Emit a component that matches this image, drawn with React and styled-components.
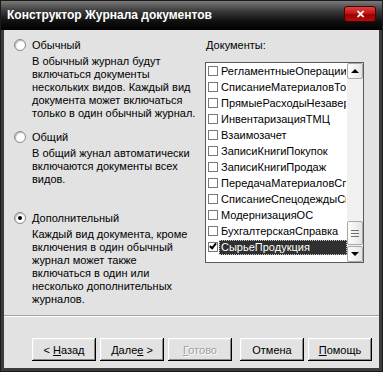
import styled, { createGlobalStyle } from "styled-components";

const GlobalStyle = createGlobalStyle`
  html, body {
    margin: 0;
    padding: 0;
    background: #2b2b2b;
  }
  * {
    box-sizing: border-box;
  }
`;

const options = [
  {
    label: "Обычный",
    text: [
      "В обычный журнал будут",
      "включаться документы",
      "нескольких видов. Каждый вид",
      "документа может включаться",
      "только в один обычный журнал.",
    ],
    gap: 0,
  },
  {
    label: "Общий",
    text: [
      "В общий жунал автоматически",
      "включаются документы всех",
      "видов.",
    ],
    gap: 10,
  },
  {
    label: "Дополнительный",
    text: [
      "Каждый вид документа, кроме",
      "включения в один обычный",
      "журнал может также",
      "включаться в один или",
      "несколько дополнительных",
      "журналов.",
    ],
    gap: 25,
    checked: true,
  },
];

// the list is narrow, long names are cut by the scrollbar as in the original
const documents = [
  "РегламентныеОперацииП",
  "СписаниеМатериаловТов",
  "ПрямыеРасходыНезавер",
  "ИнвентаризацияТМЦ",
  "Взаимозачет",
  "ЗаписиКнигиПокупок",
  "ЗаписиКнигиПродаж",
  "ПередачаМатериаловСпе",
  "СписаниеСпецодеждыСп",
  "МодернизацияОС",
  "БухгалтерскаяСправка",
  "СырьеПродукция",
];

const App = () => {
  return (
    <>
      <GlobalStyle />
      <Window>
        <TitleBar>
          <Title>Конструктор Журнала документов</Title>
          <CloseButton>✕</CloseButton>
        </TitleBar>
        <Client>
          <Body>
            <Left>
              {options.map((o) => (
                <Option key={o.label} $gap={o.gap}>
                  <RadioRow>
                    <Radio $checked={o.checked} />
                    <span>{o.label}</span>
                  </RadioRow>
                  <Description>
                    {o.text.map((line) => (
                      <div key={line}>{line}</div>
                    ))}
                  </Description>
                </Option>
              ))}
            </Left>
            <Right>
              <ListLabel>
                <u>Д</u>окументы:
              </ListLabel>
              <ListBox>
                <Items>
                  {documents.map((d, i) => {
                    const selected = i === documents.length - 1;
                    return (
                      <Item key={d}>
                        <CheckBox>{selected && <CheckMark />}</CheckBox>
                        <ItemText $selected={selected}>{d}</ItemText>
                      </Item>
                    );
                  })}
                </Items>
                <ScrollBar>
                  <ScrollButton>
                    <Arrow $up />
                  </ScrollButton>
                  <Track>
                    <Thumb>
                      <Grip />
                      <Grip />
                      <Grip />
                    </Thumb>
                  </Track>
                  <ScrollButton>
                    <Arrow />
                  </ScrollButton>
                </ScrollBar>
              </ListBox>
            </Right>
          </Body>
          <Separator />
          <ButtonRow>
            <Button>
              &lt; <u>Н</u>азад
            </Button>
            <Button>
              Дале<u>е</u> &gt;
            </Button>
            <Button disabled>
              <u>Г</u>отово
            </Button>
            <Button $wide>Отмена</Button>
            <Button>
              <u>П</u>омощь
            </Button>
          </ButtonRow>
        </Client>
      </Window>
    </>
  );
};

export default App;

const Window = styled.div`
  width: 383px;
  height: 372px;
  display: flex;
  flex-direction: column;
  background: #3c3c3c;
  border: 1px solid #1a1a1a;
  font-family: "Liberation Sans", Arial, sans-serif;
  font-size: 11px;
  color: #000;
  overflow: hidden;
`;

const TitleBar = styled.div`
  height: 29px;
  flex-shrink: 0;
  display: flex;
  align-items: center;
  justify-content: space-between;
  padding: 0 6px 4px 6px;
  background: linear-gradient(#7a7a7a 0%, #3a3a3a 35%, #101010 70%, #000 100%);
`;

const Title = styled.div`
  color: #fff;
  font-weight: bold;
  font-size: 12px;
  padding-top: 3px;
`;

const CloseButton = styled.div`
  width: 32px;
  height: 16px;
  margin-top: 1px;
  border: 1px solid #4a0000;
  border-radius: 3px;
  background: linear-gradient(#e04040 0%, #c01818 45%, #9c0000 55%, #b01010 100%);
  color: #fff;
  font-size: 11px;
  font-weight: bold;
  display: flex;
  align-items: center;
  justify-content: center;
  line-height: 1;
`;

const Client = styled.div`
  flex: 1;
  margin: 0 3px 3px;
  background: #e2e2e2;
  display: flex;
  flex-direction: column;
`;

const Body = styled.div`
  display: flex;
  height: 285px;
`;

const Left = styled.div`
  width: 196px;
  padding: 8px 0 0 10px;
`;

const Option = styled.div`
  margin-top: ${(p) => p.$gap}px;
`;

const RadioRow = styled.div`
  display: flex;
  align-items: center;
  gap: 6px;
  height: 14px;
  line-height: 14px;
`;

const Radio = styled.span`
  width: 12px;
  height: 12px;
  border-radius: 50%;
  flex-shrink: 0;
  background: radial-gradient(circle at 60% 60%, #ffffff 40%, #d8d8d8 100%);
  border: 1px solid #8a8a8a;
  box-shadow: inset 1px 1px 0 #c0c0c0;
  display: flex;
  align-items: center;
  justify-content: center;

  &::after {
    content: "";
    width: 4px;
    height: 4px;
    border-radius: 50%;
    background: ${(p) => (p.$checked ? "#000" : "transparent")};
  }
`;

const Description = styled.div`
  margin-top: 3px;
  padding-left: 18px;
  line-height: 13px;
  white-space: nowrap;
`;

const Right = styled.div`
  flex: 1;
  padding: 8px 0 0 5px;
`;

const ListLabel = styled.div`
  height: 14px;
  line-height: 14px;
  padding-left: 1px;
`;

const ListBox = styled.div`
  margin-top: 10px;
  width: 159px;
  height: 201px;
  display: flex;
  background: #fff;
  border: 1px solid #5a5a5a;
`;

const Items = styled.div`
  flex: 1;
  min-width: 0;
  overflow: hidden;
`;

const Item = styled.div`
  height: 16px;
  display: flex;
  align-items: center;
  padding-left: 2px;
`;

const CheckBox = styled.span`
  width: 10px;
  height: 10px;
  flex-shrink: 0;
  border: 1px solid #7a7a7a;
  background: #fff;
  position: relative;
`;

const CheckMark = styled.span`
  position: absolute;
  left: 2px;
  top: -1px;
  width: 4px;
  height: 7px;
  border: solid #000;
  border-width: 0 2px 2px 0;
  transform: rotate(40deg);
`;

const ItemText = styled.span`
  flex: 1;
  height: 15px;
  line-height: 13px;
  margin-left: 1px;
  padding: 0 1px;
  white-space: nowrap;
  overflow: hidden;
  color: ${(p) => (p.$selected ? "#fff" : "#000")};
  background: ${(p) => (p.$selected ? "#303030" : "transparent")};
  border: 1px dotted ${(p) => (p.$selected ? "#c8c8c8" : "transparent")};
`;

const ScrollBar = styled.div`
  width: 16px;
  flex-shrink: 0;
  display: flex;
  flex-direction: column;
  background: #f0f0f0;
`;

const ScrollButton = styled.div`
  height: 16px;
  flex-shrink: 0;
  border: 1px solid #a8a8a8;
  border-radius: 2px;
  background: linear-gradient(90deg, #fdfdfd, #e4e4e4);
  display: flex;
  align-items: center;
  justify-content: center;
`;

const Arrow = styled.span`
  width: 0;
  height: 0;
  border-left: 4px solid transparent;
  border-right: 4px solid transparent;
  ${(p) =>
    p.$up ? "border-bottom: 4px solid #000;" : "border-top: 4px solid #000;"}
`;

const Track = styled.div`
  flex: 1;
  display: flex;
  flex-direction: column;
  justify-content: flex-end;
  padding-bottom: 1px;
`;

const Thumb = styled.div`
  height: 24px;
  border: 1px solid #a8a8a8;
  border-radius: 2px;
  background: linear-gradient(90deg, #fdfdfd, #e4e4e4);
  display: flex;
  flex-direction: column;
  align-items: center;
  justify-content: center;
  gap: 2px;
`;

const Grip = styled.span`
  width: 8px;
  height: 1px;
  background: #707070;
`;

const Separator = styled.div`
  height: 2px;
  border-top: 1px solid #a0a0a0;
  border-bottom: 1px solid #ffffff;
`;

const ButtonRow = styled.div`
  flex: 1;
  display: flex;
  padding: 21px 0 0 28px;
  gap: 4px;
`;

const Button = styled.button`
  width: 64px;
  height: 23px;
  margin-left: ${(p) => (p.$wide ? "4px" : "0")};
  padding: 0;
  font-family: "Liberation Sans", Arial, sans-serif;
  font-size: 11px;
  font-weight: 400;
  background: #e2e2e2;
  color: #000;
  border: none;
  box-shadow: inset -1px -1px 0 #000, inset 1px 1px 0 #fff,
    inset -2px -2px 0 #8a8a8a, inset 2px 2px 0 #e8e8e8;

  &:disabled {
    color: #a0a0a0;
    text-shadow: 1px 1px 0 #fff;
  }

  u {
    text-underline-offset: 1px;
  }
`;
